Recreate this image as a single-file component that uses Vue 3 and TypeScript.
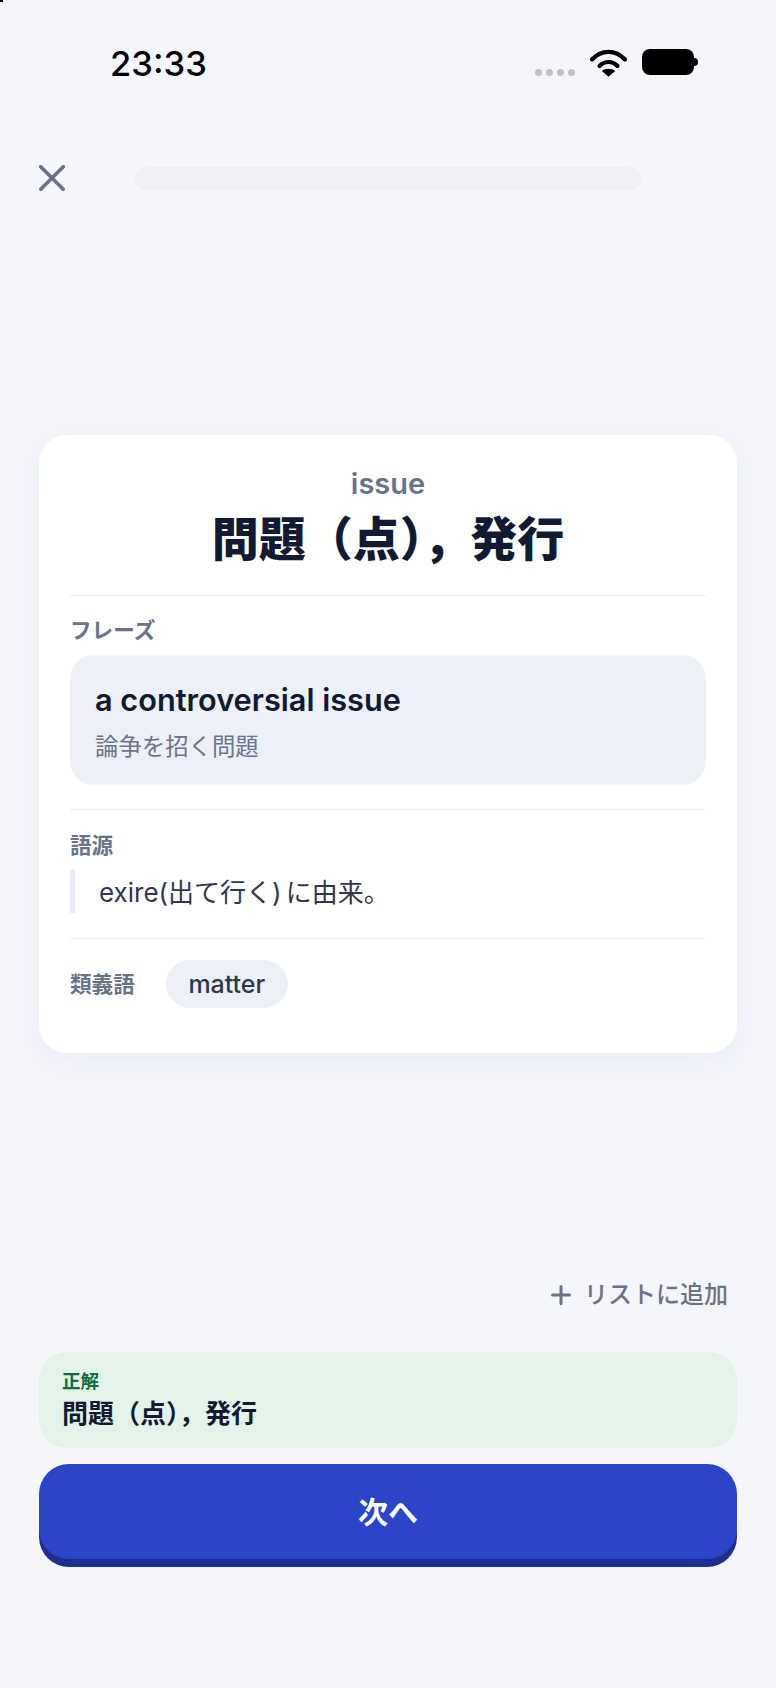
<script setup lang="ts">
const title = '問題（点），発行'
</script>

<template>
  <div class="page">
    <i class="corner"></i>
    <div class="status">
      <span class="time">23:33</span>
      <div class="status-icons">
        <div class="dots"><i></i><i></i><i></i><i></i></div>
        <svg class="wifi" width="37" height="28" viewBox="0 0 37 28">
          <path d="M2 10.5C6.5 5.6 12.2 2.8 18.5 2.8S30.5 5.6 35 10.5" fill="none" stroke="#000" stroke-width="4.2" stroke-linecap="round"/>
          <path d="M9.5 17C12 14.4 15 13 18.5 13S25 14.4 27.5 17" fill="none" stroke="#000" stroke-width="4.2" stroke-linecap="round"/>
          <path d="M18.5 27.8L11.8 22C13.6 20.6 15.9 19.8 18.5 19.8S23.4 20.6 25.2 22Z" fill="#000"/>
        </svg>
        <div class="battery"><span class="cell"></span><span class="nub"></span></div>
      </div>
    </div>

    <div class="top">
      <svg class="close" width="26" height="26" viewBox="0 0 26 26">
        <path d="M1.8 1.8L24.2 24.2M24.2 1.8L1.8 24.2" fill="none" stroke="#6b7389" stroke-width="3.6" stroke-linecap="round"/>
      </svg>
      <div class="progress"></div>
    </div>

    <section class="card">
      <div class="head">
        <div class="word">issue</div>
        <h1 class="meaning">{{ title }}</h1>
      </div>
      <div class="block phrase-block">
        <div class="label">フレーズ</div>
        <div class="phrase">
          <div class="phrase-en">a controversial issue</div>
          <div class="phrase-ja">論争を招く問題</div>
        </div>
      </div>
      <div class="block origin-block">
        <div class="label">語源</div>
        <div class="origin">exire(出て行く) に由来。</div>
      </div>
      <div class="block syn-block">
        <div class="label">類義語</div>
        <span class="chip">matter</span>
      </div>
    </section>

    <div class="add">
      <svg width="20" height="20" viewBox="0 0 20 20">
        <path d="M10 1.5V18.5M1.5 10H18.5" fill="none" stroke="#6b7389" stroke-width="3" stroke-linecap="round"/>
      </svg>
      <span>リストに追加</span>
    </div>

    <div class="answer">
      <div class="answer-label">正解</div>
      <div class="answer-text">{{ title }}</div>
    </div>
    <button class="next">次へ</button>
  </div>
</template>

<style>
html, body { margin: 0; background: #f5f6fc; }
</style>

<style scoped>
.page {
  position: relative;
  width: 776px;
  height: 1688px;
  box-sizing: border-box;
  padding: 0 39px;
  background: #f5f6fc;
  display: flex;
  flex-direction: column;
  font-family: Inter, "Noto Sans CJK JP", sans-serif;
  color: #111a30;
  overflow: hidden;
}
.corner { position: absolute; left: 0; top: 0; width: 3px; height: 2px; background: #000; }
.status {
  height: 100px;
  display: flex;
  justify-content: space-between;
  box-sizing: border-box;
  padding: 42px 38px 0 71px;
}
.time { font-size: 34.6px; font-weight: 500; line-height: 42px; color: #000; }
.status-icons { display: flex; align-items: flex-start; padding-top: 7px; height: 28px; }
.dots { display: flex; gap: 4px; margin-top: 20px; margin-right: 15px; }
.dots i { width: 7px; height: 7px; border-radius: 50%; background: #c1c1c5; }
.wifi { margin-right: 15px; }
.battery { display: flex; align-items: center; height: 26px; margin-right: 1px; }
.cell { width: 52px; height: 26px; border-radius: 8px; background: #000; }
.nub { width: 4px; height: 8px; border-radius: 0 4px 4px 0; background: #000; }
.top { display: flex; align-items: center; margin-top: 65px; height: 26px; gap: 70px; }
.close { flex: none; }
.progress { width: 506px; height: 23px; border-radius: 12px; background: #eef0f6; }
.card {
  margin-top: 244px;
  height: 618px;
  box-sizing: border-box;
  background: #fff;
  border-radius: 28px;
  padding: 32px 31px 0;
  box-shadow: 0 8px 30px rgba(40, 50, 100, 0.05);
}
.head { text-align: center; height: 128px; border-bottom: 1.5px solid #eceef5; }
.word { font-size: 29px; font-weight: 600; line-height: 34px; color: #6b7389; }
.meaning { margin: 10px 0 0; font-size: 47px; font-weight: 900; line-height: 56px; color: #111a30; }
.label { font-size: 21.6px; font-weight: 600; line-height: 26px; color: #6b7389; }
.phrase-block { height: 214px; padding-top: 21px; box-sizing: border-box; border-bottom: 1.5px solid #eceef5; }
.phrase { margin-top: 12px; height: 130px; box-sizing: border-box; padding: 25.5px 25px; border-radius: 24px; background: #edf0f7; }
.phrase-en { font-size: 30.7px; font-weight: 600; line-height: 38px; color: #111a30; }
.phrase-ja { margin-top: 12px; font-size: 23.4px; line-height: 32px; color: #6b7389; }
.origin-block { height: 129px; padding-top: 22px; box-sizing: border-box; border-bottom: 1.5px solid #eceef5; }
.origin {
  margin-top: 12px;
  height: 43px;
  border-left: 5.5px solid #e6e9fb;
  padding-left: 24px;
  font-size: 26px;
  word-spacing: -3px;
  line-height: 45px;
  color: #2f3650;
}
.syn-block { display: flex; align-items: center; gap: 31px; padding-top: 21px; }
.chip {
  height: 48px;
  width: 122px;
  border-radius: 24px;
  background: #edf0f7;
  text-align: center;
  font-size: 25px;
  font-weight: 550;
  line-height: 48px;
  color: #2f3650;
}
.add {
  margin-top: 227px;
  align-self: flex-end;
  display: flex;
  align-items: center;
  gap: 13px;
  padding-right: 9px;
  font-size: 24px;
  font-weight: 500;
  line-height: 30px;
  color: #6b7389;
}
.answer {
  margin-top: 42px;
  height: 96px;
  box-sizing: border-box;
  padding: 17px 23px;
  border-radius: 28px;
  background: #e4f3ea;
}
.answer-label { font-size: 18.5px; font-weight: 700; line-height: 24px; color: #0f6b3a; }
.answer-text { margin-top: 4px; font-size: 26px; font-weight: 700; line-height: 34px; color: #111a30; }
.next {
  display: block;
  width: 100%;
  margin-top: 16px;
  height: 95px;
  padding: 0 0 4px;
  border: 0;
  border-radius: 30px;
  background: #2a45c8;
  box-shadow: 0 8px 0 #1e2f8f;
  color: #fff;
  font: 700 30px Inter, "Noto Sans CJK JP", sans-serif;
}
</style>
